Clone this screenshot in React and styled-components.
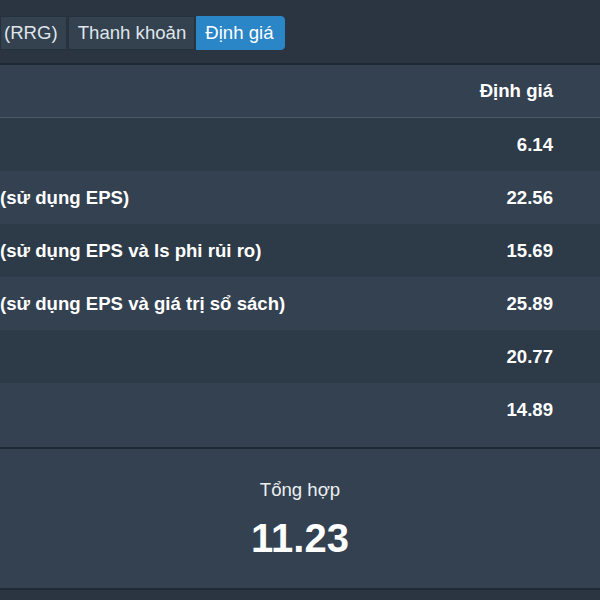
import React from 'react';
import styled, { createGlobalStyle } from 'styled-components';

const GlobalStyle = createGlobalStyle`
  html, body {
    margin: 0;
    padding: 0;
    background: #2a3541;
  }
  body {
    font-family: "Liberation Sans", Arial, sans-serif;
  }
`;

const Page = styled.div`
  width: 600px;
  height: 600px;
  overflow: hidden;
  background: #2a3541;
  display: flex;
  flex-direction: column;
`;

const TabBar = styled.div`
  display: flex;
  gap: 1px;
  padding: 16px 0 13px 0;
  border-bottom: 2px solid #1f2933;
`;

const Tab = styled.div`
  height: 32px;
  display: flex;
  align-items: center;
  padding: ${p => (p.$first ? '0 8px 0 3px' : p.$active ? '0 10px 0 8px' : '0 8px 0 9px')};
  font-size: 18.6px;
  color: ${p => (p.$active ? '#ffffff' : '#dfe5ea')};
  background: ${p => (p.$active ? '#2b86c7' : '#34414e')};
  border: 1px solid ${p => (p.$active ? '#2b86c7' : '#25313c')};
  border-radius: ${p => (p.$active ? '0 4px 4px 0' : '0')};
  white-space: nowrap;
`;

const Table = styled.div`
  display: flex;
  flex-direction: column;
  border-bottom: 2px solid #1f2933;
  background: #334150;
  padding-bottom: 11px;
`;

const HeadRow = styled.div`
  height: 52px;
  display: flex;
  align-items: center;
  justify-content: flex-end;
  padding-right: 47px;
  background: #334150;
  border-bottom: 1px solid #4b5967;
  font-size: 18.6px;
  font-weight: bold;
  color: #ffffff;
`;

const Row = styled.div`
  height: 53px;
  display: flex;
  align-items: center;
  justify-content: space-between;
  padding-right: 47px;
  background: ${p => (p.$odd ? '#2d3a47' : '#334150')};
  font-size: 18.6px;
  font-weight: bold;
  color: #ffffff;
`;

const Label = styled.span`
  white-space: nowrap;
`;

const Value = styled.span`
  margin-left: auto;
`;

const Summary = styled.div`
  height: 141px;
  box-sizing: border-box;
  padding-top: 30px;
  display: flex;
  flex-direction: column;
  align-items: center;
  background: #334150;
  border-bottom: 2px solid #1f2933;
`;

const SummaryTitle = styled.div`
  font-size: 18.6px;
  line-height: 22px;
  color: #eceff2;
`;

const SummaryValue = styled.div`
  margin-top: 14px;
  font-size: 40px;
  line-height: 46px;
  font-weight: bold;
  color: #ffffff;
`;

const rows = [
  { label: '', value: '6.14' },
  { label: '(sử dụng EPS)', value: '22.56' },
  { label: '(sử dụng EPS và ls phi rủi ro)', value: '15.69' },
  { label: '(sử dụng EPS và giá trị sổ sách)', value: '25.89' },
  { label: '', value: '20.77' },
  { label: '', value: '14.89' },
];

export default function App() {
  return (
    <>
      <GlobalStyle />
      <Page>
        <TabBar>
          <Tab $first>(RRG)</Tab>
          <Tab>Thanh khoản</Tab>
          <Tab $active>Định giá</Tab>
        </TabBar>
        <Table>
          <HeadRow>Định giá</HeadRow>
          {rows.map((r, i) => (
            <Row key={i} $odd={i % 2 === 0}>
              <Label>{r.label}</Label>
              <Value>{r.value}</Value>
            </Row>
          ))}
        </Table>
        <Summary>
          <SummaryTitle>Tổng hợp</SummaryTitle>
          <SummaryValue>11.23</SummaryValue>
        </Summary>
      </Page>
    </>
  );
}
